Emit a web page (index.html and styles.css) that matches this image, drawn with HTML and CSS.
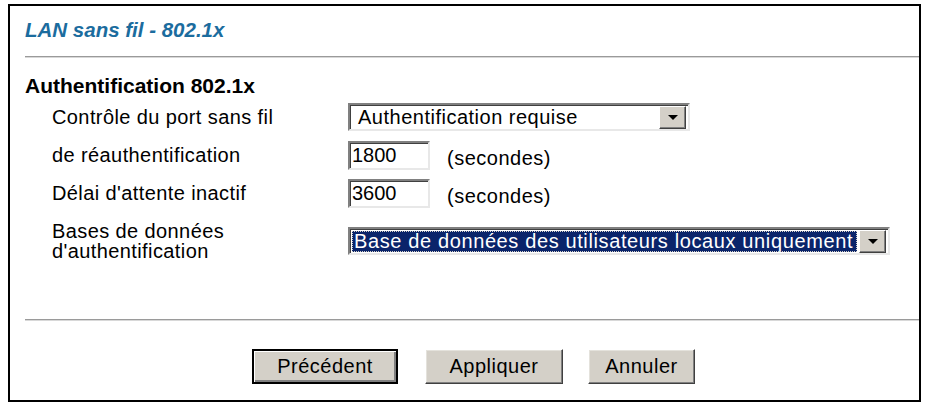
FILE: index.html
```html
<!DOCTYPE html>
<html lang="fr">
<head>
<meta charset="utf-8">
<title>LAN sans fil - 802.1x</title>
<link rel="stylesheet" href="styles.css">
</head>
<body>
<div class="frame">
  <div class="title">LAN sans fil - 802.1x</div>
  <div class="rule"></div>
  <div class="heading">Authentification 802.1x</div>
  <div class="form">
    <div class="row">
      <div class="label">Contrôle du port sans fil</div>
      <div class="field">
        <div class="combo combo-short">
          <span class="combo-text">Authentification requise</span>
          <span class="combo-btn"><span class="tri"></span></span>
        </div>
      </div>
    </div>
    <div class="row">
      <div class="label">de réauthentification</div>
      <div class="field">
        <div class="input">1800</div>
        <span class="unit">(secondes)</span>
      </div>
    </div>
    <div class="row">
      <div class="label">Délai d'attente inactif</div>
      <div class="field">
        <div class="input">3600</div>
        <span class="unit">(secondes)</span>
      </div>
    </div>
    <div class="row row-tall">
      <div class="label">Bases de données<br>d'authentification</div>
      <div class="field">
        <div class="combo combo-long">
          <span class="combo-text selected">Base de données des utilisateurs locaux uniquement</span>
          <span class="combo-btn"><span class="tri"></span></span>
        </div>
      </div>
    </div>
  </div>
  <div class="rule rule-bottom"></div>
  <div class="buttons">
    <div class="btn btn-default btn-prev"><span>Précédent</span></div>
    <div class="btn btn-apply"><span>Appliquer</span></div>
    <div class="btn btn-cancel"><span>Annuler</span></div>
  </div>
</div>
</body>
</html>
```
FILE: styles.css
```css
* { box-sizing: border-box; }
html, body { margin: 0; padding: 0; background: #fff; }
body {
  padding: 4px 0 0 8px;
  font-family: "Liberation Sans", Arial, sans-serif;
  color: #000;
}
.frame {
  width: 913px;
  height: 398px;
  border: 2px solid #000;
  background: #fff;
  padding-left: 15px;
}
.title {
  margin-top: 12px;
  height: 24px;
  line-height: 24px;
  font-size: 20.5px;
  font-weight: bold;
  font-style: italic;
  color: #1b6c9e;
}
.rule {
  margin-top: 14px;
  height: 2px;
  border-top: 1px solid #9a9a9a;
  border-bottom: 1px solid #d8d8d8;
}
.heading {
  margin-top: 16px;
  height: 24px;
  line-height: 24px;
  font-size: 21px;
  font-weight: bold;
}
.form { padding-left: 27px; }
.row {
  display: flex;
  align-items: center;
  height: 38px;
}
.row-tall { height: 58px; }
.label {
  width: 296px;
  font-size: 20px;
  letter-spacing: 0.4px;
  line-height: 20px;
}
.field {
  display: flex;
  align-items: center;
}
.combo {
  display: flex;
  align-items: center;
  height: 28px;
  border-style: solid;
  border-width: 2px;
  border-color: #808080 #e8e8e8 #e8e8e8 #808080;
  box-shadow: inset 1px 1px 0 #404040;
  background: #fff;
  padding: 1px 2px 1px 3px;
  font-size: 20px;
}
.combo-short { width: 342px; }
.combo-long { width: 542px; padding-left: 2px; }
.combo-text {
  flex: 1;
  min-width: 0;
  overflow: hidden;
  white-space: nowrap;
  line-height: 21px;
  padding-left: 5px;
  letter-spacing: 0.5px;
}
.combo-text.selected {
  background: #0a246a;
  color: #fff;
  outline: 1px dotted #d4d0c8;
  outline-offset: -1px;
  padding-left: 2px;
  margin-right: 2px;
  letter-spacing: 0.62px;
}
.combo-btn {
  flex: none;
  width: 27px;
  height: 23px;
  background: #d4d0c8;
  border-style: solid;
  border-width: 1px;
  border-color: #fff #404040 #404040 #fff;
  box-shadow: inset -1px -1px 0 #808080;
  display: flex;
  align-items: center;
  justify-content: center;
}
.tri {
  width: 0;
  height: 0;
  border-left: 5px solid transparent;
  border-right: 5px solid transparent;
  border-top: 5px solid #000;
}
.input {
  width: 82px;
  height: 29px;
  border-style: solid;
  border-width: 2px;
  border-color: #808080 #e8e8e8 #e8e8e8 #808080;
  box-shadow: inset 1px 1px 0 #404040;
  font-size: 20px;
  line-height: 24px;
  padding-left: 2px;
}
.unit {
  margin-left: 17px;
  margin-top: 6px;
  font-size: 20px;
  letter-spacing: 0.5px;
}
.rule-bottom { margin-top: 49px; }
.buttons {
  display: flex;
  align-items: center;
  padding-left: 227px;
  margin-top: 28px;
}
.btn {
  height: 35px;
  background: #d4d0c8;
  border-style: solid;
  border-width: 1px;
  border-color: #fff #404040 #404040 #fff;
  box-shadow: inset -1px -1px 0 #808080, inset 1px 1px 0 #e4e2dc;
  display: flex;
  align-items: center;
  justify-content: center;
  font-size: 20px;
  letter-spacing: 0.5px;
}
.btn-default {
  border: 2px solid #000;
  box-shadow: inset 1px 1px 0 #fff, inset -2px -2px 0 #808080;
}
.btn-prev { width: 146px; }
.btn-apply { width: 138px; margin-left: 27px; }
.btn-cancel { width: 107px; margin-left: 25px; }
```
